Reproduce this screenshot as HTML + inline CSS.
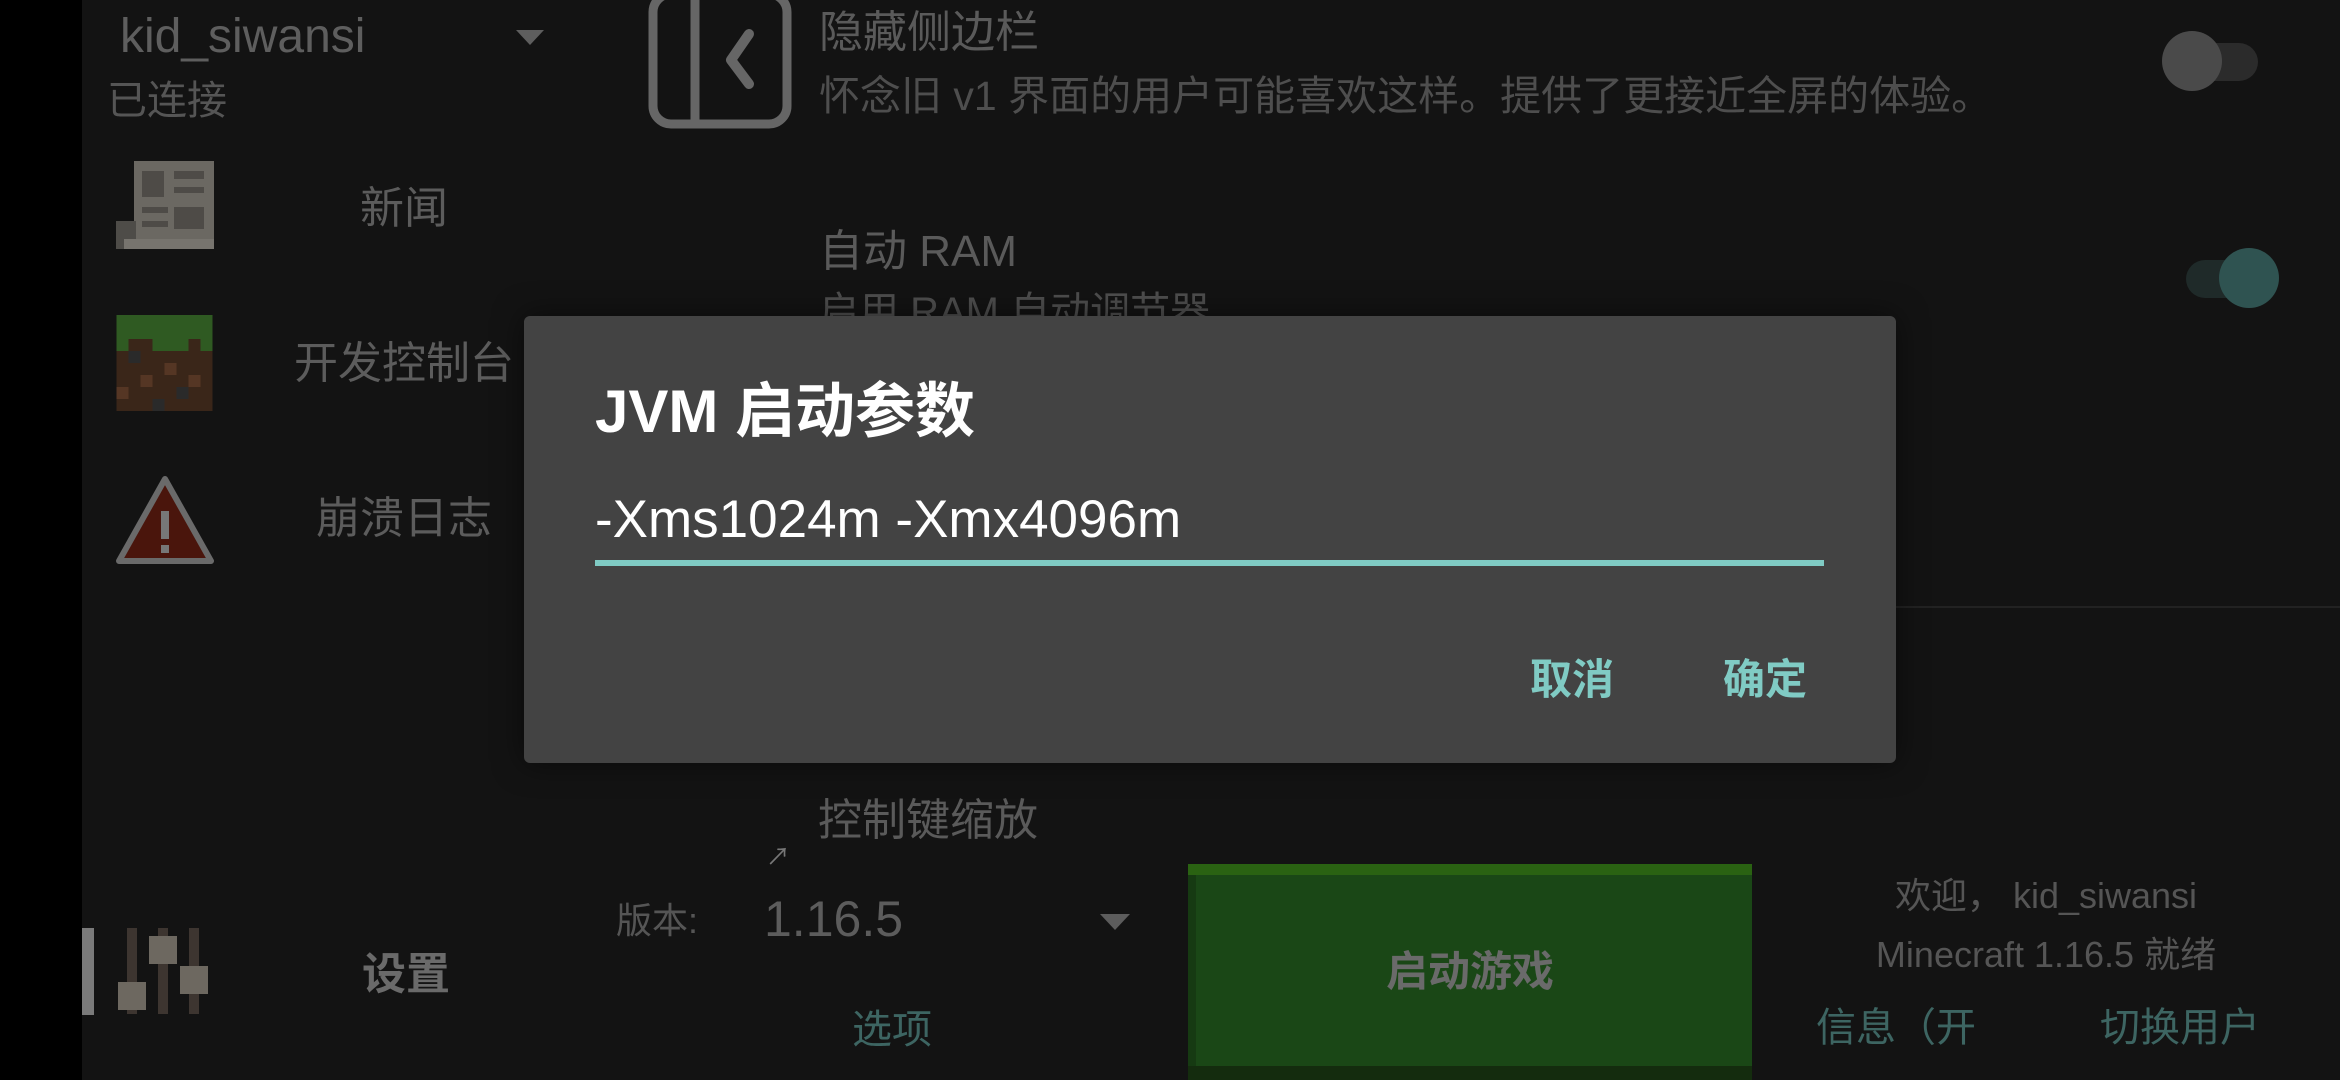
<!DOCTYPE html>
<html><head><meta charset="utf-8"><style>
*{margin:0;padding:0;box-sizing:border-box}
body{width:2340px;height:1080px;background:#131313;position:relative;overflow:hidden;font-family:"Liberation Sans","Noto Sans CJK SC",sans-serif;color:#5c5c5c}
.a{position:absolute;white-space:nowrap;line-height:1}
.c{transform:translateX(-50%)}
.teal{color:#3d6562}
</style></head><body>
<div class="a" style="left:0;top:0;width:82px;height:1080px;background:#000"></div>

<div class="a" style="left:120px;top:13px;font-size:48px;color:#5e5e5e">kid_siwansi</div>
<div class="a" style="left:516px;top:30px;width:0;height:0;border-left:14px solid transparent;border-right:14px solid transparent;border-top:15px solid #5e5e5e"></div>
<div class="a" style="left:107px;top:81px;font-size:40px;color:#555">已连接</div>

<!-- news icon -->
<svg class="a" style="left:116px;top:161px" width="98" height="88" viewBox="0 0 98 88">
<rect x="18" y="0" width="80" height="82" fill="#6b6862"/>
<rect x="0" y="60" width="20" height="28" fill="#4e4c48"/><rect x="8" y="78" width="90" height="10" fill="#77746e"/>
<rect x="26" y="10" width="22" height="26" fill="#4e4b47"/><rect x="58" y="10" width="30" height="8" fill="#4e4b47"/><rect x="58" y="26" width="30" height="6" fill="#4e4b47"/>
<rect x="26" y="46" width="26" height="6" fill="#4e4b47"/><rect x="58" y="46" width="30" height="22" fill="#4e4b47"/><rect x="26" y="60" width="26" height="6" fill="#4e4b47"/>
</svg>
<div class="a c" style="left:404px;top:187px;font-size:44px">新闻</div>

<!-- grass icon -->
<svg class="a" style="left:116px;top:315px" width="97" height="96" viewBox="0 0 8 8" shape-rendering="crispEdges">
<rect width="8" height="8" fill="#3a2619"/><rect width="8" height="2" fill="#2f5a22"/><rect x="0" y="2" width="1" height="1" fill="#2f5a22"/><rect x="3" y="2" width="3" height="1" fill="#2f5a22"/><rect x="7" y="2" width="1" height="1" fill="#2f5a22"/>
<rect x="1" y="3" width="1" height="1" fill="#2a2a2a"/><rect x="4" y="4" width="1" height="1" fill="#553624"/><rect x="2" y="5" width="1" height="1" fill="#553624"/><rect x="6" y="5" width="1" height="1" fill="#553624"/><rect x="5" y="6" width="1" height="1" fill="#2a2a2a"/><rect x="3" y="7" width="1" height="1" fill="#2a2a2a"/><rect x="0" y="6" width="1" height="1" fill="#553624"/>
</svg>
<div class="a c" style="left:404px;top:342px;font-size:44px">开发控制台</div>

<!-- warning icon -->
<svg class="a" style="left:116px;top:475px" width="98" height="90" viewBox="0 0 98 90">
<path d="M49 4 L95 86 L3 86 Z" fill="#4a150c" stroke="#6a6a6a" stroke-width="6" stroke-linejoin="round"/>
<rect x="45" y="36" width="8" height="28" fill="#777"/><rect x="45" y="70" width="8" height="8" fill="#777"/>
</svg>
<div class="a c" style="left:404px;top:497px;font-size:44px">崩溃日志</div>

<!-- settings -->
<div class="a" style="left:82px;top:928px;width:12px;height:87px;background:#7a7a7a"></div>
<svg class="a" style="left:118px;top:928px" width="98" height="86" viewBox="0 0 98 86">
<rect x="9" y="0" width="10" height="86" fill="#3d3530"/><rect x="40" y="0" width="10" height="86" fill="#3d3530"/><rect x="71" y="0" width="10" height="86" fill="#3d3530"/>
<rect x="0" y="54" width="28" height="28" fill="#6d6860"/><rect x="31" y="8" width="28" height="28" fill="#6d6860"/><rect x="62" y="38" width="28" height="28" fill="#6d6860"/>
</svg>
<div class="a c" style="left:406px;top:953px;font-size:44px;font-weight:bold;color:#6a6a6a">设置</div>

<!-- sidebar toggle icon -->
<svg class="a" style="left:645px;top:-10px" width="150" height="144" viewBox="0 0 150 144">
<rect x="8" y="4" width="134" height="130" rx="18" fill="none" stroke="#666" stroke-width="9"/>
<line x1="50" y1="4" x2="50" y2="134" stroke="#666" stroke-width="9"/>
<path d="M104 44 L86 70 L104 94" fill="none" stroke="#666" stroke-width="10" stroke-linecap="round" stroke-linejoin="round"/>
</svg>

<div class="a" style="left:819px;top:11px;font-size:44px;color:#5a5a5a">隐藏侧边栏</div>
<div class="a" style="left:819px;top:76px;font-size:41px;color:#4e4e4e">怀念旧 v1 界面的用户可能喜欢这样。提供了更接近全屏的体验。</div>
<div class="a" style="left:2170px;top:43px;width:88px;height:38px;border-radius:19px;background:#2b2b2b"></div>
<div class="a" style="left:2162px;top:31px;width:60px;height:60px;border-radius:50%;background:#4a4a4a"></div>

<div class="a" style="left:819px;top:230px;font-size:44px;color:#5a5a5a">自动 RAM</div>
<div class="a" style="left:819px;top:292px;font-size:40px;color:#4e4e4e">启用 RAM 自动调节器</div>
<div class="a" style="left:2186px;top:260px;width:84px;height:38px;border-radius:19px;background:#1f2a29"></div>
<div class="a" style="left:2219px;top:248px;width:60px;height:60px;border-radius:50%;background:#2f5351"></div>

<div class="a" style="left:1895px;top:606px;width:445px;height:2px;background:#222"></div>

<div class="a" style="left:818px;top:799px;font-size:44px;color:#5a5a5a">控制键缩放</div>
<div class="a" style="left:766px;top:846px;font-size:24px;color:#777">↗</div>

<div class="a" style="left:616px;top:903px;font-size:36px;color:#555">版本:</div>
<div class="a" style="left:764px;top:894px;font-size:50px;color:#5c5c5c">1.16.5</div>
<div class="a" style="left:1100px;top:914px;width:0;height:0;border-left:15px solid transparent;border-right:15px solid transparent;border-top:16px solid #5c5c5c"></div>
<div class="a c teal" style="left:892px;top:1010px;font-size:40px">选项</div>

<!-- launch button -->
<div class="a" style="left:1188px;top:864px;width:564px;height:216px;background:#1a4716"></div>
<div class="a" style="left:1188px;top:864px;width:564px;height:11px;background:#2a6212"></div>
<div class="a" style="left:1188px;top:875px;width:8px;height:205px;background:#163a12"></div>
<div class="a" style="left:1188px;top:1066px;width:564px;height:14px;background:#142c0e"></div>
<div class="a c" style="left:1470px;top:951px;font-size:42px;font-weight:bold;color:#6a6a6a">启动游戏</div>

<div class="a c" style="left:2046px;top:878px;font-size:36px;color:#555">欢迎， kid_siwansi</div>
<div class="a c" style="left:2046px;top:937px;font-size:36px;color:#555">Minecraft 1.16.5 就绪</div>
<div class="a teal" style="left:1816px;top:1008px;font-size:40px">信息（开</div>
<div class="a c teal" style="left:2180px;top:1008px;font-size:40px">切换用户</div>

<!-- dialog -->
<div class="a" style="left:524px;top:316px;width:1372px;height:447px;background:#434343;border-radius:6px;box-shadow:0 0 30px rgba(0,0,0,.5)"></div>
<div class="a" style="left:595px;top:382px;font-size:60px;font-weight:bold;color:#fff">JVM 启动参数</div>
<div class="a" style="left:595px;top:493px;font-size:53px;color:#fff">-Xms1024m -Xmx4096m</div>
<div class="a" style="left:595px;top:560px;width:1229px;height:6px;background:#80cbc4"></div>
<div class="a" style="left:1530px;top:659px;font-size:42px;font-weight:bold;color:#80cbc4">取消</div>
<div class="a" style="left:1723px;top:659px;font-size:42px;font-weight:bold;color:#80cbc4">确定</div>
</body></html>
